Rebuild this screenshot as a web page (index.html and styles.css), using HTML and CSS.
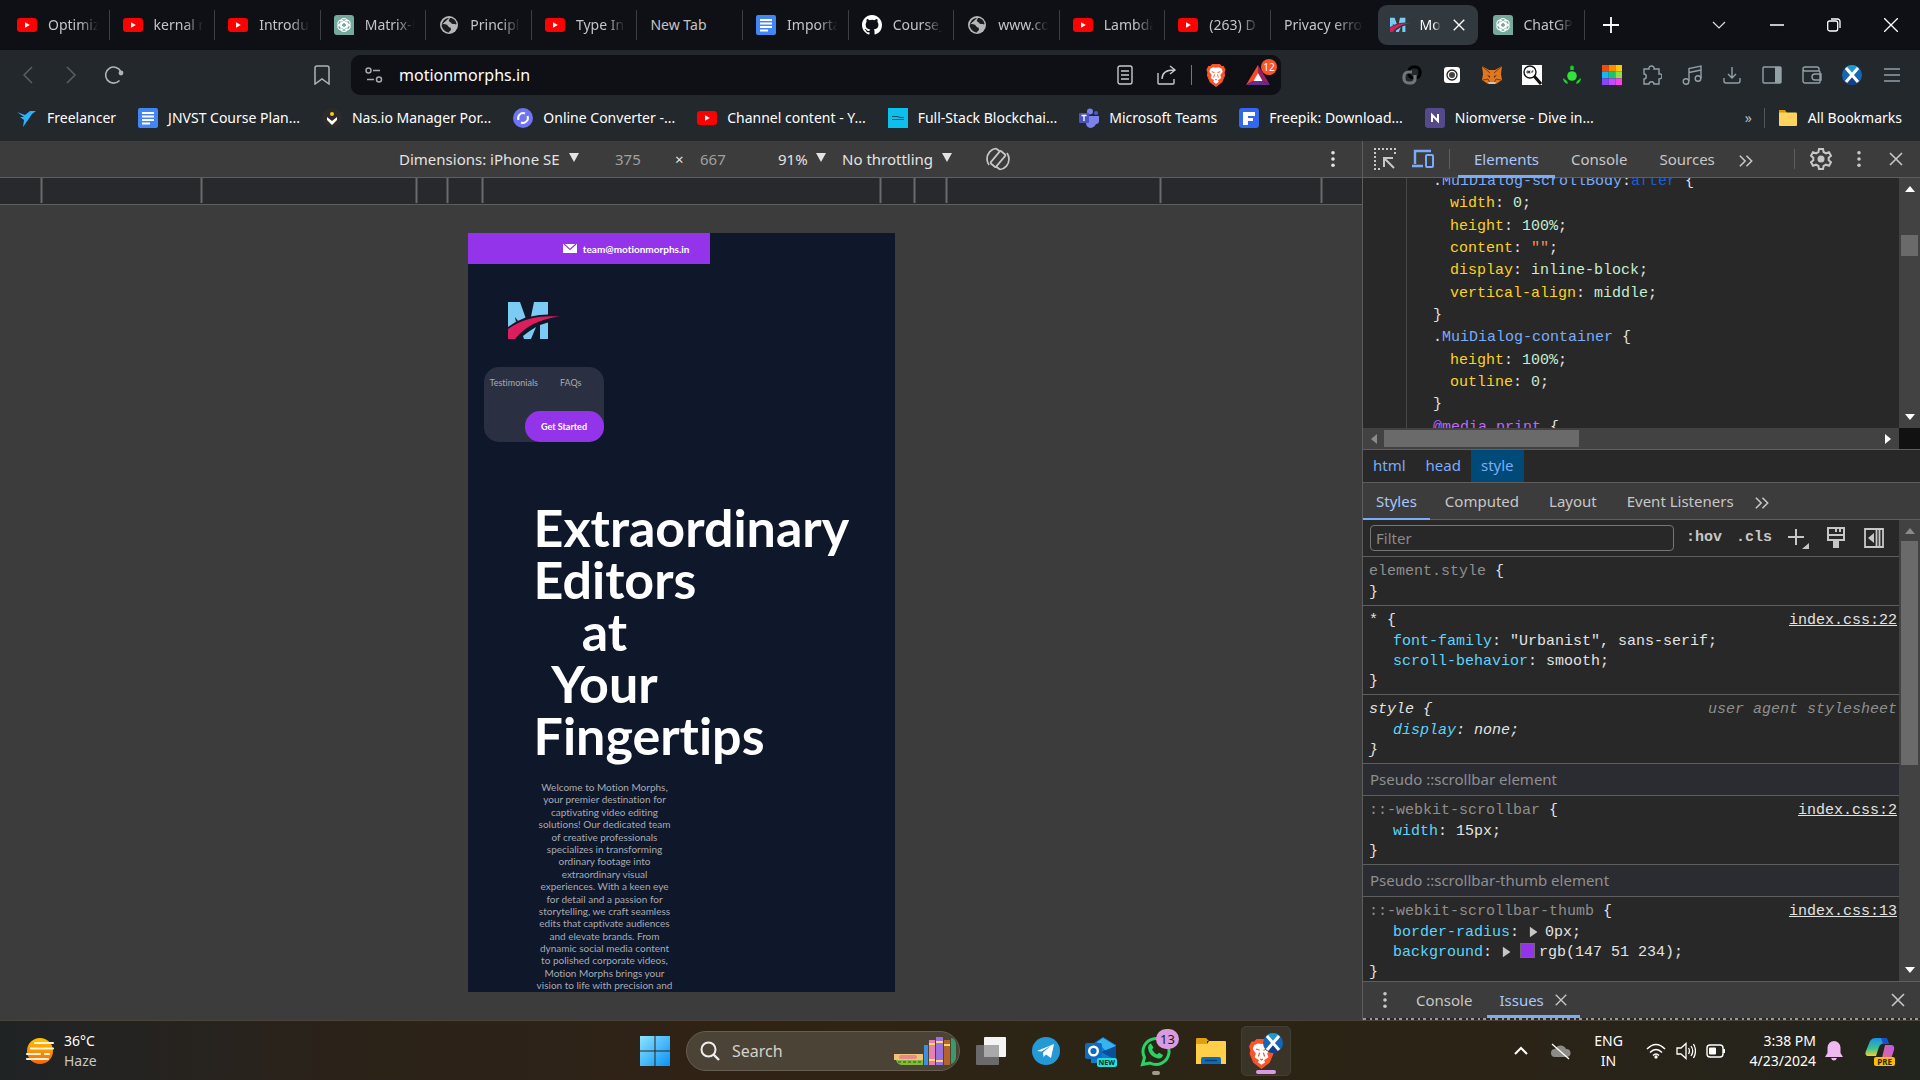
FILE: index.html
```html
<!DOCTYPE html>
<html lang="en">
<head>
<meta charset="utf-8">
<title>Motion Morphs</title>
<link rel="stylesheet" href="styles.css">
</head>
<body>
<svg class="defs" aria-hidden="true">
  <defs>
    <symbol id="yt" viewBox="0 0 20 20"><rect y="3" width="20" height="14" rx="3" fill="#f00"/><path d="M8 7.200v5.600l4.800-2.800z" fill="#fff"/></symbol>
    <symbol id="gpt" viewBox="0 0 20 20"><path d="M3 0h14a3 3 0 0 1 3 3v17H3a3 3 0 0 1-3-3V3a3 3 0 0 1 3-3z" fill="#75a99c"/><g fill="none" stroke="#fff" stroke-width="1.100"><rect x="7" y="3.500" width="6" height="9" rx="3"/><rect x="7" y="3.500" width="6" height="9" rx="3" transform="rotate(60 10 10)"/><rect x="7" y="3.500" width="6" height="9" rx="3" transform="rotate(120 10 10)"/><rect x="7" y="3.500" width="6" height="9" rx="3" transform="rotate(180 10 10)"/><rect x="7" y="3.500" width="6" height="9" rx="3" transform="rotate(240 10 10)"/><rect x="7" y="3.500" width="6" height="9" rx="3" transform="rotate(300 10 10)"/></g></symbol>
    <symbol id="globe" viewBox="0 0 20 20"><circle cx="10" cy="10" r="9" fill="#b4b6b9"/><path d="M10 3c-3 0-6 2-7 6 2 0 5 0 6 2s3 1 3 3-2 2-2 3.500c-4-.5-7-3.500-7.500-7.500M11 3c-1 2-2 3 0 4s1 2 3 2 3 1 3.500 0c-.5-3.500-3-6-6.500-6z" fill="#1b1c20"/></symbol>
    <symbol id="doc" viewBox="0 0 20 20"><rect width="20" height="20" rx="2" fill="#4285f4"/><path d="M4 5h12M4 8.500h12M4 12h12M4 15.500h8" stroke="#fff" stroke-width="1.900"/></symbol>
    <symbol id="github" viewBox="0 0 16 16"><path fill="#fff" d="M8 0C3.580 0 0 3.580 0 8c0 3.540 2.290 6.530 5.470 7.590.4.070.55-.17.55-.38 0-.19-.01-.82-.01-1.490-2.010.37-2.530-.49-2.690-.94-.09-.23-.48-.94-.82-1.130-.28-.15-.68-.52-.01-.53.63-.01 1.080.58 1.230.82.72 1.210 1.870.87 2.330.66.070-.52.28-.87.51-1.070-1.780-.2-3.640-.89-3.640-3.950 0-.87.31-1.590.82-2.150-.08-.2-.36-1.020.08-2.120 0 0 .67-.21 2.200.82a7.400 7.400 0 0 1 4 0c1.530-1.040 2.200-.82 2.200-.82.44 1.100.16 1.920.08 2.120.51.56.82 1.270.82 2.150 0 3.070-1.870 3.750-3.650 3.950.29.25.54.73.54 1.480 0 1.070-.01 1.930-.01 2.200 0 .21.15.46.55.38A8.010 8.010 0 0 0 16 8c0-4.420-3.580-8-8-8z"/></symbol>
    <symbol id="mm" viewBox="0 0 52 38"><path d="M0 0h12l5.500 15.500Q8 19 0 25zM26 0h14v12.500q-9 0-17 2zM15 34q6-5 13-9l-5 12h-7zM32 23l8-2.500V37h-8z" fill="#7bcbf2"/><path d="M7 15l1 5 2-1z" fill="#0f172a"/><path d="M0 37V27Q20 12 52 14.500Q22 18 7 37z" fill="#dc1e5e"/></symbol>
    <symbol id="brave" viewBox="0 0 20 24"><path d="M6 0h8l2 2h2l2 4-1 3 .5 3-3 7L10 24l-6.500-5-3-7L1 9 0 6l2-4h2z" fill="#fb542b"/><path d="M10 4l3-.5L16 5l1 3-2.500 3.500 1 3L12 17l1 1.500-3 2-3-2L8 17l-3.500-2.500 1-3L3 8l1-3 3-1.500z" fill="#fff"/><path d="M5.500 8l3 1M14.500 8l-3 1M8.500 11l-1 3M11.500 11l1 3M9 16l1 .800 1-.800" fill="none" stroke="#fb542b" stroke-width="1"/></symbol>
    <symbol id="saltire" viewBox="0 0 20 20"><clipPath id="disc"><circle cx="10" cy="10" r="10"/></clipPath><g clip-path="url(#disc)"><path d="M0 0h20v20H0z" fill="#1765b5"/><path d="M0 0h20L10 10z" fill="#1d9bd0"/><path d="M10 10l10 10H0z" fill="#123f8c"/><path d="M4 3l12 14M16 3L4 17" stroke="#fff" stroke-width="3"/></g></symbol>
    <symbol id="folder" viewBox="0 0 20 20"><path d="M1 2h6l2 3h9v4H1z" fill="#d99a0b"/><rect x="1" y="4.500" width="18" height="13.500" rx="1" fill="#ffd45e"/></symbol>
    <symbol id="cross" viewBox="0 0 16 16"><path d="M2 2l12 12M14 2L2 14" fill="none" stroke="currentColor" stroke-width="1.600"/></symbol>
    <symbol id="dots" viewBox="0 0 6 20"><circle cx="3" cy="3" r="2" fill="currentColor"/><circle cx="3" cy="10" r="2" fill="currentColor"/><circle cx="3" cy="17" r="2" fill="currentColor"/></symbol>
    <symbol id="more" viewBox="0 0 18 16"><path d="M2 2l6 6-6 6M9.500 2l6 6-6 6" fill="none" stroke="currentColor" stroke-width="1.800"/></symbol>
    <symbol id="tri" viewBox="0 0 10 10" preserveAspectRatio="none"><path d="M0 0h10L5 10z" fill="currentColor"/></symbol>
  </defs>
</svg>

<header class="browser">
  <div class="tabstrip">
    <nav class="tabs" aria-label="Tabs">
      <button class="tab"><svg class="fav"><use href="#yt"/></svg><span class="tab-title">Optimiz</span></button>
      <button class="tab"><svg class="fav"><use href="#yt"/></svg><span class="tab-title">kernal m</span></button>
      <button class="tab"><svg class="fav"><use href="#yt"/></svg><span class="tab-title">Introdu</span></button>
      <button class="tab"><svg class="fav"><use href="#gpt"/></svg><span class="tab-title">Matrix-M</span></button>
      <button class="tab"><svg class="fav"><use href="#globe"/></svg><span class="tab-title">Principl</span></button>
      <button class="tab"><svg class="fav"><use href="#yt"/></svg><span class="tab-title">Type Inf</span></button>
      <button class="tab"><span class="tab-title tab-full">New Tab</span></button>
      <button class="tab"><svg class="fav"><use href="#doc"/></svg><span class="tab-title">Importa</span></button>
      <button class="tab"><svg class="fav"><use href="#github"/></svg><span class="tab-title">Course_</span></button>
      <button class="tab"><svg class="fav"><use href="#globe"/></svg><span class="tab-title">www.co</span></button>
      <button class="tab"><svg class="fav"><use href="#yt"/></svg><span class="tab-title">Lambda</span></button>
      <button class="tab"><svg class="fav"><use href="#yt"/></svg><span class="tab-title">(263) D</span></button>
      <button class="tab tab-plain"><span class="tab-title">Privacy error</span></button>
      <button class="tab tab-active"><svg class="fav"><use href="#mm"/></svg><span class="tab-title">Mo</span><svg class="tab-close"><use href="#cross"/></svg></button>
      <button class="tab"><svg class="fav"><use href="#gpt"/></svg><span class="tab-title">ChatGP</span></button>
    </nav>
    <div class="window-controls">
      <button class="win-new" aria-label="New tab"><svg width="16" height="16" viewBox="0 0 16 16"><path d="M8 0v16M0 8h16" stroke="#fff" stroke-width="1.800"/></svg></button>
      <button class="win" aria-label="Search tabs"><svg width="14" height="8" viewBox="0 0 14 8"><path d="M1 1l6 6 6-6" fill="none" stroke="#ddd" stroke-width="1.200"/></svg></button>
      <button class="win" aria-label="Minimize"><svg width="14" height="2"><path d="M0 1h14" stroke="#fff" stroke-width="1.500"/></svg></button>
      <button class="win" aria-label="Restore"><svg width="14" height="14" viewBox="0 0 14 14"><rect x=".7" y="3" width="10" height="10" rx="2" fill="none" stroke="#fff" stroke-width="1.300"/><path d="M4 1h6.500A2.500 2.500 0 0 1 13 3.500V10" fill="none" stroke="#fff" stroke-width="1.300"/></svg></button>
      <button class="win" aria-label="Close"><svg width="14" height="14" viewBox="0 0 14 14"><path d="M0 0l14 14M14 0L0 14" stroke="#fff" stroke-width="1.300"/></svg></button>
    </div>
  </div>

  <div class="toolbar">
    <div class="nav-buttons">
      <button class="cell" aria-label="Back"><svg width="10" height="18" viewBox="0 0 10 18"><path d="M9 1L1 9l8 8" fill="none" stroke="#596167" stroke-width="1.500"/></svg></button>
      <button class="cell" aria-label="Forward"><svg width="10" height="18" viewBox="0 0 10 18"><path d="M1 1l8 8-8 8" fill="none" stroke="#596167" stroke-width="1.500"/></svg></button>
      <button class="cell" aria-label="Reload"><svg width="20" height="20" viewBox="0 0 20 20"><path d="M15.500 15.500A8 8 0 1 1 17 7" fill="none" stroke="#a9b4bb" stroke-width="1.600"/><circle cx="17" cy="8" r="2.400" fill="#a9b4bb"/></svg></button>
      <button class="cell nav-mark" aria-label="Bookmark"><svg width="16" height="20" viewBox="0 0 16 20"><path d="M1 3a2 2 0 0 1 2-2h10a2 2 0 0 1 2 2v16l-7-5-7 5z" fill="none" stroke="#a9b4bb" stroke-width="1.500"/></svg></button>
    </div>
    <div class="address">
      <svg width="18" height="16" viewBox="0 0 18 16"><g fill="none" stroke="#a5a8ad" stroke-width="1.500"><circle cx="3.500" cy="3.500" r="2.500"/><path d="M8 3.500h7M2 12.500h7"/><circle cx="14" cy="12.500" r="2.500"/></g></svg>
      <input class="address-input" type="text" value="motionmorphs.in" aria-label="Address">
      <svg width="16" height="20" viewBox="0 0 16 20"><g fill="none" stroke="#c7c9cc" stroke-width="1.400"><rect x="1" y="1" width="14" height="18" rx="2"/><path d="M4 6h8M4 10h8M4 14h8"/></g></svg>
      <svg width="20" height="20" viewBox="0 0 20 20"><path d="M1 8v10a1 1 0 0 0 1 1h14a1 1 0 0 0 1-1v-4M5 14c0-6 4-9 12-9M13 1l5 4-5 4" fill="none" stroke="#c7c9cc" stroke-width="1.400"/></svg>
      <span class="address-rule"></span>
      <svg width="20" height="23"><use href="#brave"/></svg>
      <span class="bat"><svg width="24" height="20" viewBox="0 0 24 20"><path d="M12 0L0 20l12-7z" fill="#ff4724"/><path d="M12 0l12 20-12-7z" fill="#9e1f63"/><path d="M0 20h24l-12-7z" fill="#662d91"/><path d="M12 8l-4.500 8h9z" fill="#fff"/></svg><b class="bat-count">12</b></span>
    </div>
    <div class="extensions">
      <button class="cell" aria-label="Link"><svg width="20" height="20" viewBox="0 0 20 20"><g fill="none" stroke-width="3.200"><rect x="7" y="2" width="11" height="11" rx="4.500" stroke="#000"/><path d="M10 7H6.500A4.500 4.500 0 0 0 2 11.500v2A4.500 4.500 0 0 0 6.500 18H9a4 4 0 0 0 4-4v-4" stroke="#70777c"/></g></svg></button>
      <button class="cell" aria-label="Recorder"><svg width="16" height="16" viewBox="0 0 16 16"><rect width="16" height="16" rx="3" fill="#fff"/><circle cx="8" cy="8" r="5" fill="none" stroke="#222" stroke-width="1.300"/><circle cx="8" cy="8" r="3" fill="#444"/></svg></button>
      <button class="cell" aria-label="MetaMask"><svg width="20" height="20" viewBox="0 0 20 20"><path d="M0 1l7 4h6l7-4-1 8 1 6-6 4H6l-6-4 1-6z" fill="#e2761b"/><path d="M0 1l8 7M20 1l-8 7M1 15l5-1 2 4h4l2-4 5 1" stroke="#763d16" fill="none"/><path d="M6 17h8l-1 2H7z" fill="#d7c1b3"/><path d="M5 10l3 1v2zM15 10l-3 1v2z" fill="#233447"/></svg></button>
      <button class="cell" aria-label="OCR"><svg width="20" height="20" viewBox="0 0 20 20"><path d="M0 0h20v20H0z" fill="#fff"/><circle cx="8" cy="7" r="6" fill="none" stroke="#111" stroke-width="1.400"/><path d="M12 11l7 8" stroke="#111" stroke-width="3"/><path d="M5 6v2h1.500V6zM8.500 6H7.500v2h1M10 8V6h1.500" fill="none" stroke="#111" stroke-width=".8"/></svg></button>
      <button class="cell" aria-label="Idea"><svg width="20" height="20" viewBox="0 0 20 20"><circle cx="10" cy="11" r="4.800" fill="#2ee53b"/><circle cx="10" cy="2.500" r="2" fill="#13c41f"/><path d="M8 5l2-4 2 4M1 13q0 5 5 6l-1-3zM19 13q0 5-5 6l1-3z" fill="#13d81f"/></svg></button>
      <button class="cell" aria-label="Palette"><svg width="20" height="20" viewBox="0 0 21 21"><path d="M0 0h7v7H0z" fill="#f44a0c"/><path d="M7 0h7v7H7z" fill="#ff8a00"/><path d="M14 0h7v7h-7z" fill="#ffc800"/><path d="M0 7h7v7H0z" fill="#12b7f5"/><path d="M7 7h7v7H7z" fill="#12c96a"/><path d="M14 7h7v7h-7z" fill="#8ede4a"/><path d="M0 14h7v7H0z" fill="#8247ff"/><path d="M7 14h7v7H7z" fill="#c04bff"/><path d="M14 14h7v7h-7z" fill="#f843e4"/></svg></button>
      <button class="cell" aria-label="Extensions"><svg width="20" height="20" viewBox="0 0 20 20"><path d="M2 4h5c-1-4 6-4 5 0h5v5c4-1 4 5 0 5v5h-5c0-3-5-3-5 0H2v-5c3 0 3-5 0-5z" fill="none" stroke="#92a0a8" stroke-width="1.400"/></svg></button>
      <button class="cell" aria-label="Music"><svg width="20" height="20" viewBox="0 0 20 20"><g fill="none" stroke="#92a0a8" stroke-width="1.400"><circle cx="4" cy="16.500" r="2.800"/><circle cx="16" cy="13.500" r="2.800"/><path d="M7 16V3.500L19 1v12.500M7 7.500L19 5"/></g></svg></button>
      <button class="cell" aria-label="Downloads"><svg width="18" height="18" viewBox="0 0 18 18"><path d="M9 1v11M5 8l4 4 4-4M1 12v3a2 2 0 0 0 2 2h12a2 2 0 0 0 2-2v-3" fill="none" stroke="#92a0a8" stroke-width="1.400"/></svg></button>
      <button class="cell" aria-label="Sidebar"><svg width="20" height="18" viewBox="0 0 20 18"><rect x="1" y="1" width="18" height="16" rx="1" fill="none" stroke="#92a0a8" stroke-width="1.400"/><path d="M13 1h6v16h-6z" fill="#92a0a8"/></svg></button>
      <button class="cell" aria-label="Wallet"><svg width="20" height="18" viewBox="0 0 20 18"><path d="M17 5V3a2 2 0 0 0-2-2H3a2 2 0 0 0 0 4h14a1 1 0 0 1 1 1v10a1 1 0 0 1-1 1H3a2 2 0 0 1-2-2V3M19 8h-6a3 3 0 0 0 0 6h6z" fill="none" stroke="#92a0a8" stroke-width="1.400"/></svg></button>
      <button class="cell" aria-label="Profile"><svg width="20" height="20"><use href="#saltire"/></svg></button>
      <button class="cell" aria-label="Menu"><svg width="16" height="14" viewBox="0 0 16 14"><path d="M0 1h16M0 7h16M0 13h16" stroke="#92a0a8" stroke-width="1.400"/></svg></button>
    </div>
  </div>

  <nav class="bookmarks" aria-label="Bookmarks">
    <a class="bookmark" href="#"><svg class="fav" viewBox="0 0 20 20"><path d="M0 4l8 3 5-4h6l-4 3-4 6-5 7 1-7-4-3 4 0z" fill="#29b2fe"/></svg>Freelancer</a>
    <a class="bookmark" href="#"><svg class="fav"><use href="#doc"/></svg>JNVST Course Plan...</a>
    <a class="bookmark" href="#"><svg class="fav" viewBox="0 0 20 20"><circle cx="10" cy="10" r="10" fill="#2c2b29"/><circle cx="10" cy="6" r="2" fill="#fbc91b"/><path d="M5 9l5 4 5-4v3l-5 5-5-5z" fill="#fff"/></svg>Nas.io Manager Por...</a>
    <a class="bookmark" href="#"><svg class="fav" viewBox="0 0 20 20"><circle cx="10" cy="10" r="10" fill="#6f74f2"/><path d="M5.500 12A5 5 0 0 1 12 5.500M14.500 8A5 5 0 0 1 8 14.500" fill="none" stroke="#fff" stroke-width="2"/></svg>Online Converter -...</a>
    <a class="bookmark" href="#"><svg class="fav"><use href="#yt"/></svg>Channel content - Y...</a>
    <a class="bookmark" href="#"><svg class="fav" viewBox="0 0 20 20"><path d="M0 0h20v20H0z" fill="#0cc0eb"/><path d="M4 8.500h6l2 1h4M4 11.500h12" stroke="#0b4f66" fill="none"/></svg>Full-Stack Blockchai...</a>
    <a class="bookmark" href="#"><svg class="fav" viewBox="0 0 20 20"><circle cx="11" cy="3.500" r="3" fill="#7b83eb"/><circle cx="17" cy="5" r="2" fill="#5059c9"/><path d="M7 8h13v5q0 3-3 3-2 4-6 4-4-1-4-5z" fill="#7b83eb"/><rect y="5" width="10" height="10" rx="1" fill="#4b53bc"/><path d="M2.500 7.500h5M5 7.500v5.500" stroke="#fff" stroke-width="1.300"/></svg>Microsoft Teams</a>
    <a class="bookmark" href="#"><svg class="fav" viewBox="0 0 20 20"><rect width="20" height="20" rx="3" fill="#3268ee"/><path d="M4 4h12v4H9v2h5v3H9v4H4z" fill="#fff"/></svg>Freepik: Download...</a>
    <a class="bookmark" href="#"><svg class="fav" viewBox="0 0 20 20"><rect width="20" height="20" rx="3" fill="#54498b"/><path d="M7 14V7l6 6V6" fill="none" stroke="#fff" stroke-width="2"/></svg>Niomverse - Dive in...</a>
    <span class="bookmarks-more">»</span>
    <a class="bookmark bookmark-all" href="#"><svg class="fav"><use href="#folder"/></svg>All Bookmarks</a>
  </nav>
</header>

<main class="workspace">
  <section class="device">
    <div class="device-bar">
      <label class="pick pick-model"><select aria-label="Dimensions"><option>Dimensions: iPhone SE</option></select><svg class="pick-arrow"><use href="#tri"/></svg></label>
      <input class="size" type="text" value="375" aria-label="Width">
      <span class="times">×</span>
      <input class="size" type="text" value="667" aria-label="Height">
      <label class="pick pick-zoom"><select aria-label="Zoom"><option>91%</option></select><svg class="pick-arrow"><use href="#tri"/></svg></label>
      <label class="pick pick-throttle"><select aria-label="Throttling"><option>No throttling</option></select><svg class="pick-arrow"><use href="#tri"/></svg></label>
      <button class="rotate" aria-label="Rotate"><svg width="24" height="24" viewBox="0 0 24 24"><g fill="none" stroke="#c7c7c7" stroke-width="1.700"><rect x="8.500" y="4" width="7" height="16" rx="1" transform="rotate(40 12 12)"/><path d="M10 1.500C5 2 1 6.500 1 12q0 3 2 6M14 22.500c5-.5 9-5 9-10.500q0-3-2-6M10 1.500l4 3M14 22.500l-4-3"/></g></svg></button>
      <button class="device-more" aria-label="More options"><svg width="6" height="18"><use href="#dots"/></svg></button>
    </div>
    <svg class="ruler" aria-hidden="true"><path d="M41.500 0v25M201.500 0v25M416.500 0v25M447.500 0v25M482.500 0v25M880.500 0v25M914.500 0v25M946.500 0v25M1160.500 0v25M1321.500 0v25" stroke="#6a6b6d" stroke-width="2"/></svg>
    <div class="stage">
      <article class="phone">
        <div class="site">
          <div class="site-top"><svg width="14" height="9" viewBox="0 0 14 9"><path d="M0 0h14v9H0z" fill="#fff"/><path d="M1 0l6 5.500L13 0" fill="none" stroke="#9333ea" stroke-width="1.200"/></svg><a href="#">team@motionmorphs.in</a></div>
          <svg class="site-logo"><use href="#mm"/></svg>
          <nav class="site-nav">
            <div class="site-links"><a href="#">Testimonials</a><a href="#">FAQs</a></div>
            <button class="site-cta">Get Started</button>
          </nav>
          <div class="hero">
            <h1 class="hero-title">Extraordinary<br>Editors<br>at<br>Your<br>Fingertips</h1>
            <p class="hero-text">Welcome to Motion Morphs,<br>your premier destination for<br>captivating video editing<br>solutions! Our dedicated team<br>of creative professionals<br>specializes in transforming<br>ordinary footage into<br>extraordinary visual<br>experiences. With a keen eye<br>for detail and a passion for<br>storytelling, we craft seamless<br>edits that captivate audiences<br>and elevate brands. From<br>dynamic social media content<br>to polished corporate videos,<br>Motion Morphs brings your<br>vision to life with precision and</p>
          </div>
        </div>
      </article>
    </div>
  </section>

  <aside class="devtools">
    <div class="panel-bar">
      <button class="tool" aria-label="Inspect"><svg width="22" height="22" viewBox="0 0 22 22"><path d="M21 6V1H1v20h5" fill="none" stroke="#c7c7c7" stroke-width="2" stroke-dasharray="2 2"/><path d="M20 20l-9-9M10 19v-9h9" fill="none" stroke="#c7c7c7" stroke-width="2"/></svg></button>
      <button class="tool" aria-label="Toggle device"><svg width="22" height="20" viewBox="0 0 22 20"><path d="M3 15V2h16M0 17h11" fill="none" stroke="#7cacf8" stroke-width="2.400"/><rect x="14" y="6" width="7" height="12" rx="1" fill="none" stroke="#7cacf8" stroke-width="2"/></svg></button>
      <span class="rule"></span>
      <button class="ptab ptab-on">Elements</button>
      <button class="ptab">Console</button>
      <button class="ptab">Sources</button>
      <button class="ptab-more" aria-label="More tabs"><svg width="18" height="14"><use href="#more"/></svg></button>
      <span class="rule rule-end"></span>
      <button class="tool" aria-label="Settings"><svg width="22" height="22" viewBox="0 0 22 22"><path d="M9 1h4l.6 3 2.400 1.300 3-1 2 3.500-2.300 2v2.400l2.300 2-2 3.500-3-1-2.400 1.300L13 21H9l-.6-3L6 16.700l-3 1-2-3.500 2.300-2V9.800L1 7.800l2-3.500 3 1L8.400 4z" fill="none" stroke="#c7c7c7" stroke-width="2"/><circle cx="11" cy="11" r="3.500" fill="#c7c7c7"/></svg></button>
      <button class="tool" aria-label="More options"><svg width="6" height="18"><use href="#dots"/></svg></button>
      <button class="tool tool-last" aria-label="Close"><svg width="16" height="16"><use href="#cross"/></svg></button>
    </div>

    <div class="source">
      <div class="source-code">
        <div class="line">.<i class="k-sel">MuiDialog-scrollBody</i>:<i class="k-ps">after</i> {</div>
        <div class="line line-in"><i class="k-p">width</i>: <i class="k-v">0</i>;</div>
        <div class="line line-in"><i class="k-p">height</i>: <i class="k-v">100%</i>;</div>
        <div class="line line-in"><i class="k-p">content</i>: <i class="k-s">""</i>;</div>
        <div class="line line-in"><i class="k-p">display</i>: <i class="k-v">inline-block</i>;</div>
        <div class="line line-in"><i class="k-p">vertical-align</i>: <i class="k-v">middle</i>;</div>
        <div class="line">}</div>
        <div class="line">.<i class="k-sel">MuiDialog-container</i> {</div>
        <div class="line line-in"><i class="k-p">height</i>: <i class="k-v">100%</i>;</div>
        <div class="line line-in"><i class="k-p">outline</i>: <i class="k-v">0</i>;</div>
        <div class="line">}</div>
        <div class="line"><i class="k-at">@media print</i> {</div>
      </div>
      <div class="vbar vbar-source"><svg class="arrow arrow-up"><use href="#tri"/></svg><span class="vthumb vthumb-source"></span><svg class="arrow"><use href="#tri"/></svg></div>
    </div>
    <div class="hbar"><svg class="arrow arrow-left"><use href="#tri"/></svg><span class="hthumb"></span><svg class="arrow arrow-right"><use href="#tri"/></svg><span class="hbar-corner"></span></div>

    <nav class="crumbs" aria-label="DOM path"><a href="#">html</a><a href="#">head</a><a class="crumb-on" href="#">style</a></nav>

    <div class="subtabs">
      <button class="stab stab-on">Styles</button>
      <button class="stab">Computed</button>
      <button class="stab">Layout</button>
      <button class="stab">Event Listeners</button>
      <button class="ptab-more" aria-label="More tabs"><svg width="18" height="14"><use href="#more"/></svg></button>
    </div>

    <div class="styles">
      <div class="styles-main">
        <div class="filter">
          <input class="filter-input" type="text" placeholder="Filter" aria-label="Filter">
          <button class="filter-word">:hov</button>
          <button class="filter-word">.cls</button>
          <button class="filter-icon" aria-label="New rule"><svg width="22" height="24" viewBox="0 0 22 24"><path d="M9 3v16M1 11h16" stroke="#c7c7c7" stroke-width="2"/><path d="M22 17v6h-7z" fill="#c7c7c7"/></svg></button>
          <button class="filter-icon" aria-label="Rendering"><svg width="18" height="22" viewBox="0 0 18 22"><path d="M1 1h16v12H1zM1 8h16M9 1v4M13 1v4" fill="none" stroke="#c7c7c7" stroke-width="2"/><path d="M6 13h6v8H6z" fill="#c7c7c7"/></svg></button>
          <button class="filter-icon" aria-label="Computed sidebar"><svg width="20" height="20" viewBox="0 0 20 20"><path d="M1 1h18v18H1zM12.500 1v18M15.500 1v18" fill="none" stroke="#c7c7c7" stroke-width="1.800"/><path d="M10 5v10l-6-5z" fill="#c7c7c7"/></svg></button>
        </div>
        <section class="rule-block">
          <div class="rule-head"><span><i class="dim">element.style</i> {</span></div>
          <div>}</div>
        </section>
        <section class="rule-block">
          <div class="rule-head"><span>* {</span><a href="#">index.css:22</a></div>
          <div class="decl"><i class="prop">font-family</i>: "Urbanist", sans-serif;</div>
          <div class="decl"><i class="prop">scroll-behavior</i>: smooth;</div>
          <div>}</div>
        </section>
        <section class="rule-block rule-agent">
          <div class="rule-head"><span>style {</span><span class="dim">user agent stylesheet</span></div>
          <div class="decl"><i class="prop">display</i>: none;</div>
          <div>}</div>
        </section>
        <h2 class="pseudo">Pseudo ::scrollbar element</h2>
        <section class="rule-block">
          <div class="rule-head"><span><i class="dim">::-webkit-scrollbar</i> {</span><a href="#">index.css:2</a></div>
          <div class="decl"><i class="prop">width</i>: 15px;</div>
          <div>}</div>
        </section>
        <h2 class="pseudo">Pseudo ::scrollbar-thumb element</h2>
        <section class="rule-block">
          <div class="rule-head"><span><i class="dim">::-webkit-scrollbar-thumb</i> {</span><a href="#">index.css:13</a></div>
          <div class="decl"><i class="prop">border-radius</i>: <svg class="expand"><use href="#tri"/></svg>0px;</div>
          <div class="decl"><i class="prop">background</i>: <svg class="expand"><use href="#tri"/></svg><span class="swatch"></span>rgb(147 51 234);</div>
          <div>}</div>
        </section>
      </div>
      <div class="vbar"><svg class="arrow arrow-up arrow-off"><use href="#tri"/></svg><span class="vthumb vthumb-styles"></span><svg class="arrow"><use href="#tri"/></svg></div>
    </div>

    <div class="drawer">
      <button class="tool" aria-label="More tools"><svg width="6" height="18"><use href="#dots"/></svg></button>
      <button class="dtab">Console</button>
      <button class="dtab dtab-on">Issues<svg width="14" height="14"><use href="#cross"/></svg></button>
      <button class="tool drawer-close" aria-label="Close drawer"><svg width="16" height="16"><use href="#cross"/></svg></button>
    </div>
    <div class="drawer-edge"></div>
  </aside>
</main>

<footer class="taskbar">
  <button class="weather">
    <svg width="30" height="28" viewBox="0 0 30 28"><defs><linearGradient id="sun" x1="0" y1="0" x2="0" y2="1"><stop offset="0" stop-color="#ffc400"/><stop offset="1" stop-color="#f7630c"/></linearGradient></defs><circle cx="15" cy="14" r="13" fill="url(#sun)"/><path d="M10 6h18M6 11.500h22M2 17h13M20 17h4M2 22h21" stroke="#fff3d8" stroke-width="2.200" stroke-linecap="round"/></svg>
    <span class="weather-text"><span>36°C</span><span class="weather-sub">Haze</span></span>
  </button>

  <div class="apps">
    <button class="app app-start" aria-label="Start"><svg width="30" height="30" viewBox="0 0 30 30"><defs><linearGradient id="win" x1="0" y1="0" x2="1" y2="1"><stop offset="0" stop-color="#8be3ff"/><stop offset="1" stop-color="#0a93f5"/></linearGradient></defs><path d="M0 0h14.500v14.500H0zM15.500 0H30v14.500H15.500zM0 15.500h14.500V30H0zM15.500 15.500H30V30H15.500z" fill="url(#win)"/></svg></button>
    <label class="search">
      <svg width="20" height="20" viewBox="0 0 20 20"><circle cx="8.500" cy="8.500" r="7" fill="none" stroke="#eee" stroke-width="2"/><path d="M13.500 13.500L19 19" stroke="#eee" stroke-width="2.400"/></svg>
      <input class="search-input" type="text" placeholder="Search" aria-label="Search">
      <svg width="64" height="30" viewBox="0 0 64 30"><path d="M1 18h29v6H1z" fill="#f3c27a"/><rect x="6" y="19" width="18" height="4" rx="2" fill="#e98888"/><path d="M3 24h27v5H8q-4-1-5-5z" fill="#86b83c"/><path d="M5 26h24" stroke="#4f8a22" stroke-dasharray="3 2" stroke-width="2"/><path d="M31 9h4v20h-4z" fill="#3f8fe0"/><path d="M36 4h6v25h-6z" fill="#e77fb0"/><path d="M43 1h7v28h-7z" fill="#9a72e0"/><path d="M51 4h6v25h-6z" fill="#b5632d"/><path d="M58 2q5 0 5 8v12q-1 5-5 6z" fill="#3b9a68"/><path d="M36 8h6M43 6h7M51 9h6M36 24h6M43 25h7" stroke="#ffd966" stroke-width="2"/></svg>
    </label>
    <button class="app" aria-label="Task view"><svg width="32" height="30" viewBox="0 0 32 30"><rect x="9" y="1" width="22" height="20" rx="1" fill="#f4f4f4"/><rect x="1" y="9" width="23" height="20" rx="1" fill="#77777a" opacity=".85"/><path d="M9 9h15v12H9z" fill="#a9a9a9"/></svg></button>
    <button class="app" aria-label="Telegram"><svg width="28" height="28" viewBox="0 0 28 28"><circle cx="14" cy="14" r="14" fill="#2399d6"/><path d="M5 14L22 7l-3 14-5-3.500-2.500 2.500-.5-4.500 8-7-9.500 6z" fill="#fff"/></svg></button>
    <button class="app" aria-label="Outlook"><svg width="32" height="30" viewBox="0 0 32 30"><path d="M6 9L18 1l13 8v18H6z" fill="#1378d0"/><path d="M12 6l6-4 13 8-9 6z" fill="#35b4f0"/><path d="M31 10v14L16 16z" fill="#0a4e9c"/><rect y="7" width="17" height="16" rx="2" fill="#0f6cbd"/><circle cx="8.500" cy="15" r="4.300" fill="none" stroke="#fff" stroke-width="2.400"/></svg><b class="tag-new">NEW</b></button>
    <button class="app app-wa" aria-label="WhatsApp"><svg width="32" height="32" viewBox="0 0 32 32"><path d="M2.500 29.500l2-7A13 13 0 1 1 10 28z" fill="none" stroke="#25d366" stroke-width="3"/><path d="M11 8.500l2.500 4-1.500 2q2 3.500 5 5l2-1.800 4 2.300q-1 4-5 3.500-9-2-10-10.500 0-3.500 3-4.500z" fill="#25d366"/></svg><span class="wa-count">13</span></button>
    <button class="app" aria-label="File Explorer"><svg width="32" height="28" viewBox="0 0 32 28"><path d="M1 2q0-1 1-1h9l3 3h-2v4H1z" fill="#e0a015"/><path d="M1 7h11l2-3h16q1 0 1 1v22H1z" fill="#ffcf4a"/><path d="M6 27v-5q0-2 2-2h16q2 0 2 2v5z" fill="#0f6cbd"/><path d="M10 23.500h12" stroke="#0a3f7a" stroke-width="1.500"/></svg></button>
    <button class="app app-on" aria-label="Brave"><svg width="34" height="36" viewBox="0 0 34 36"><use href="#brave" x="0" y="6" width="25" height="30"/><use href="#saltire" x="14" y="0" width="20" height="20"/></svg></button>
  </div>

  <div class="tray">
    <button class="tray-up" aria-label="Hidden icons"><svg width="14" height="9" viewBox="0 0 14 9"><path d="M1 8l6-6 6 6" fill="none" stroke="#fff" stroke-width="2"/></svg></button>
    <svg width="22" height="18" viewBox="0 0 22 18"><path d="M5 15a4 4 0 0 1 0-8 6 6 0 0 1 11 0 4 4 0 0 1 1 8z" fill="#8d8b87"/><path d="M2 2l17 15" stroke="#fff" stroke-width="1.300"/></svg>
    <button class="lang"><span>ENG</span><span>IN</span></button>
    <button class="status" aria-label="Quick settings">
      <svg width="20" height="16" viewBox="0 0 20 16"><path d="M1 6q9-9 18 0M4 9.500q6-6 12 0M7 12.500q3-3 6 0" fill="none" stroke="#fff" stroke-width="1.500"/><circle cx="10" cy="14" r="1.700" fill="#fff"/></svg>
      <svg width="20" height="18" viewBox="0 0 20 18"><path d="M1 6h4l5-4.500v15L5 12H1zM12.500 6q2 3 0 6M15 4q3.500 5 0 10M17.500 2q4 7 0 14" fill="none" stroke="#fff" stroke-width="1.300"/></svg>
      <svg width="20" height="14" viewBox="0 0 20 14"><rect x="1" y="1" width="16" height="12" rx="3" fill="none" stroke="#fff" stroke-width="1.400"/><rect x="3" y="3.500" width="7" height="7" rx="1" fill="#fff"/><path d="M18 5v4" stroke="#fff" stroke-width="2"/></svg>
    </button>
    <button class="clock"><span>3:38 PM</span><span>4/23/2024</span></button>
    <svg class="bell" width="18" height="20" viewBox="0 0 18 20"><path d="M9 0a6.500 6.500 0 0 1 6.500 6.500V12L18 16H0l2.500-4V6.500A6.500 6.500 0 0 1 9 0zM6 17h6q-1 2.500-3 2.500T6 17z" fill="#efb8f0"/></svg>
    <button class="copilot" aria-label="Copilot"><svg width="30" height="28" viewBox="0 0 30 28"><defs><linearGradient id="cpa" x1="0" y1="0" x2="0" y2="1"><stop offset="0" stop-color="#1b8fe8"/><stop offset=".6" stop-color="#3fc48d"/><stop offset="1" stop-color="#f7cf2f"/></linearGradient><linearGradient id="cpb" x1="1" y1="0" x2="0" y2="1"><stop offset="0" stop-color="#b45cf0"/><stop offset="1" stop-color="#ff6f61"/></linearGradient></defs><path d="M10 1h10q3 0 2 3l-1 3q-5-2-7 3l-3 9H4q-5 0-3-5L5 4q2-3 5-3z" fill="url(#cpa)"/><path d="M16 1h4q3 0 4 6h-6z" fill="#1a4fd0"/><path d="M20 8h6q4 0 3 5l-3 9q-1 4-5 4h-8q3-1 4-5z" fill="url(#cpb)"/></svg><b class="tag-pre">PRE</b></button>
  </div>
</footer>
</body>
</html>
```

FILE: styles.css
```css
* { box-sizing: border-box; }

body {
  margin: 0;
  height: 100vh;
  display: flex;
  flex-direction: column;
  overflow: hidden;
  background: #3c3c3c;
  color: #fff;
  font: 14px/20px "Noto Sans", "Open Sans", sans-serif;
}

button, input, select {
  margin: 0;
  padding: 0;
  border: 0;
  background: none;
  color: inherit;
  font: inherit;
  outline: 0;
}

a { color: inherit; text-decoration: none; }
i { font-style: inherit; }
svg { flex: none; }
.defs { position: absolute; width: 0; height: 0; }
.fav { width: 20px; height: 20px; flex: none; }

/* Tab strip */
.tabstrip { display: flex; height: 50px; background: #0f1015; }
.tabs { flex: 1; display: flex; align-items: center; padding-left: 4px; min-width: 0; }
.tab {
  flex: 1 1 0;
  min-width: 0;
  height: 30px;
  display: flex;
  align-items: center;
  gap: 11px;
  padding: 0 8px 0 13px;
  border-right: 1px solid #3c3e42;
  color: #c3c4c7;
}
.tab-title {
  flex: 1;
  text-align: left;
  white-space: nowrap;
  overflow: hidden;
  -webkit-mask-image: linear-gradient(90deg, #000 60%, transparent 95%);
  mask-image: linear-gradient(90deg, #000 60%, transparent 95%);
}
.tab-full { -webkit-mask-image: none; mask-image: none; }
.tab-plain { border-right: 0; }
.tab-active {
  flex: 0 0 100px;
  height: 40px;
  margin: 0 2px;
  padding: 0 12px;
  gap: 10px;
  border: 0;
  border-radius: 9px;
  background: #32393e;
  color: #fff;
}
.tab-active .tab-title { flex: 0 0 22px; }
.tab-close { width: 14px; height: 14px; margin-left: auto; }
.window-controls { display: flex; width: 335px; align-items: center; }
.win-new { width: 53px; margin-right: 53px; display: flex; justify-content: center; }
.win { width: 58px; display: flex; justify-content: center; }

/* Navigation row */
.browser { background: #23282c; }
.toolbar { display: flex; align-items: center; height: 50px; }
.cell { width: 40px; height: 40px; display: flex; align-items: center; justify-content: center; }
.nav-buttons { display: flex; width: 351px; padding: 0 9px 0 8px; gap: 3px; }
.nav-mark { margin-left: auto; }
.address {
  flex: 1;
  height: 40px;
  display: flex;
  align-items: center;
  gap: 14px;
  padding: 0 10px 0 14px;
  border-radius: 9px;
  background: #0f1015;
}
.address-input { flex: 1; min-width: 0; padding-left: 2px; font-size: 16px; }
.address > svg + svg { margin-left: 10px; }
.address-rule { width: 1px; height: 20px; background: #74777b; }
.bat { position: relative; display: flex; margin-left: 6px; padding-right: 1px; }
.bat-count {
  position: absolute;
  top: -6px;
  right: -6px;
  width: 16px;
  border-radius: 8px;
  background: #fb542b;
  font: 10px/16px "Noto Sans", sans-serif;
  text-align: center;
}
.extensions { display: flex; width: 639px; justify-content: flex-end; padding-right: 8px; }

/* Bookmarks bar */
.bookmarks { display: flex; align-items: center; gap: 22px; height: 41px; padding: 0 18px 6px 17px; }
.bookmark { display: flex; align-items: center; gap: 10px; white-space: nowrap; }
.bookmarks-more { margin-left: auto; margin-right: -10px; color: #b8bdc1; }
.bookmark-all { padding-left: 13px; border-left: 1px solid #51565a; }

/* Workspace */
.workspace { flex: 1; min-height: 0; display: flex; font-size: 15px; color: #e3e3e3; }
.device { flex: 1; min-width: 0; display: flex; flex-direction: column; }
.device-bar { display: flex; align-items: center; height: 37px; padding-left: 399px; border-bottom: 1px solid #5e5e5e; }
.pick { display: flex; align-items: center; }
.pick select { appearance: none; flex: 1; min-width: 0; }
.pick-arrow { width: 10px; height: 9px; margin-top: -4px; }
.pick-model { width: 180px; margin-right: 36px; }
.pick-zoom { width: 48px; margin: 0 16px 0 36px; }
.pick-throttle { width: 110px; }
.size { width: 42px; color: #a0a0a0; }
.times { width: 43px; padding-left: 18px; }
.rotate { margin-left: 34px; height: 24px; }
.device-more { margin: 0 26px 0 auto; height: 18px; }
.ruler { width: 100%; height: 27px; background: #28292d; border-bottom: 1px solid #5e5e5e; }
.stage { flex: 1; min-height: 0; display: flex; justify-content: center; padding: 28px 0; }
.phone {
  width: 427px;
  overflow: hidden;
  background: #0f172a;
  font-family: Lato, sans-serif;
  font-variant-ligatures: none;
}
.site { width: 242px; }
.site-top {
  display: flex;
  align-items: center;
  justify-content: flex-end;
  gap: 6px;
  height: 31px;
  padding-right: 20px;
  background: #9333ea;
  color: #fff;
  font-size: 10px;
  font-weight: 700;
}
.site-logo { display: block; width: 52px; height: 38px; margin: 38px 0 27px 40px; }
.site-nav {
  width: 120px;
  margin-left: 16px;
  display: flex;
  flex-direction: column;
  align-items: flex-end;
  justify-content: space-between;
  height: 75px;
  border-radius: 15px;
  background: #2a3042;
}
.site-links { display: flex; gap: 22px; width: 100%; padding: 6px; color: #a7abb3; font-size: 9px; }
.site-cta {
  width: 79px;
  height: 31px;
  border-radius: 15px;
  background: #9333ea;
  color: #fff;
  font-size: 9px;
  font-weight: 700;
}
.hero { width: 142px; margin: 59px 0 0 66px; text-align: center; }
.hero-title { margin: 0; color: #fff; font-size: 52px; line-height: 52px; font-weight: 700; }
.hero-text { margin: 20px 0 0; color: #a7abb3; font-size: 10px; line-height: 1.24; white-space: nowrap; }

/* Developer tools */
.devtools { width: 558px; display: flex; flex-direction: column; border-left: 1px solid #5e5e5e; background: #282828; }
.panel-bar, .subtabs { display: flex; align-items: center; height: 37px; background: #3c3c3c; border-bottom: 1px solid #5e5e5e; color: #c7c7c7; }
.panel-bar { padding: 0 6px 0 3px; }
.tool { width: 38px; height: 36px; display: flex; align-items: center; justify-content: center; color: #c7c7c7; }
.tool-last { width: 36px; }
.rule { width: 1px; height: 20px; margin: 0 8px 0 7px; background: #5e5e5e; }
.rule-end { margin: 0 7px 0 auto; }
.ptab { height: 37px; padding: 0 16px; border-bottom: 3px solid transparent; border-top: 3px solid transparent; }
.ptab-on { color: #a8c7fa; border-bottom-color: #7cacf8; }
.ptab-more { width: 26px; height: 14px; margin-left: 2px; }
.subtabs .ptab-more { margin-left: 0; }

.source { display: flex; height: 250px; overflow: hidden; }
.source-code {
  flex: 1;
  margin: 0 0 0 43px;
  padding-left: 26px;
  border-left: 1px solid #474747;
  white-space: nowrap;
  font: 15px/1.49 "Liberation Mono", monospace;
}
.line:first-child { margin-top: -7px; }
.line-in { padding-left: 17px; }
.k-sel { color: #7cacf8; }
.k-ps { color: #1b5fd6; }
.k-p { color: #fcd21e; }
.k-v { color: #c4eed0; }
.k-s { color: #fe8d59; }
.k-at { color: #bf67ff; }

.vbar { width: 21px; display: flex; flex-direction: column; align-items: center; justify-content: space-between; padding: 8px 0; background: #424242; }
.vbar-source { height: 250px; }
.vthumb { width: 17px; background: #6a6a6a; }
.vthumb-source { height: 21px; margin: 43px 0 auto; }
.vthumb-styles { height: 224px; margin: 7px 0 auto; }
.arrow { width: 10px; height: 6px; color: #fff; }
.arrow-up { transform: rotate(180deg); }
.arrow-left { transform: rotate(90deg); color: #8a8a8a; }
.arrow-right { transform: rotate(-90deg); }
.arrow-off { color: #8a8a8a; }
.hbar { display: flex; align-items: center; height: 21px; padding-left: 6px; background: #424242; }
.hthumb { width: 195px; height: 17px; margin: 0 auto 0 5px; background: #6a6a6a; }
.hbar-corner { width: 21px; height: 21px; margin-left: 6px; background: #111; }

.crumbs { display: flex; height: 34px; border: solid #5e5e5e; border-width: 1px 0; color: #7cacf8; line-height: 31px; }
.crumbs a { padding: 0 10px; }
.crumbs .crumb-on { background: #004a77; }

.stab { height: 37px; padding: 0 15px; border-bottom: 2px solid transparent; border-top: 2px solid transparent; }
.stab-on { padding: 0 13px; color: #a8c7fa; border-bottom-color: #7cacf8; }

.styles { flex: 1; min-height: 0; display: flex; font-family: "Liberation Mono", monospace; }
.styles-main { flex: 1; min-width: 0; overflow: hidden; }
.filter { display: flex; align-items: center; height: 37px; padding: 0 6px 0 7px; border-bottom: 1px solid #5e5e5e; color: #c7c7c7; }
.filter-input {
  flex: 1;
  min-width: 0;
  height: 26px;
  padding-left: 5px;
  margin-right: 5px;
  border: 1px solid #757575;
  border-radius: 4px;
  font-family: "Noto Sans", sans-serif;
}
.filter-input::placeholder { color: #8a8a8a; }
.filter-word { width: 50px; font-weight: 700; }
.filter-icon { width: 38px; height: 26px; display: flex; align-items: center; justify-content: center; }
.rule-block { padding: 4px 2px 2px 6px; border-bottom: 1px solid #5e5e5e; line-height: 20px; }
.rule-head { display: flex; justify-content: space-between; line-height: 22px; }
.rule-head a { text-decoration: underline; }
.rule-agent { font-style: italic; }
.decl { padding-left: 24px; }
.prop { color: #5cd5fb; }
.dim { color: #8f8f8f; }
.pseudo {
  margin: 0;
  padding-left: 7px;
  border-bottom: 1px solid #5e5e5e;
  background: #2b2c31;
  color: #8f8f8f;
  font: 15px/31px "Noto Sans", sans-serif;
}
.expand { width: 11px; height: 8px; margin-right: 6px; transform: rotate(-90deg); color: #c7c7c7; }
.swatch { display: inline-block; width: 15px; height: 15px; margin: 0 4px -2px 2px; border: 1px solid #6b6b6b; background: #9333ea; }

.drawer { display: flex; align-items: center; height: 37px; padding: 0 3px; background: #3c3c3c; border-top: 1px solid #5e5e5e; }
.dtab { height: 36px; padding: 0 12px; margin-right: 3px; color: #c7c7c7; border-bottom: 3px solid transparent; border-top: 3px solid transparent; }
.dtab-on { display: flex; align-items: center; gap: 10px; color: #a8c7fa; border-bottom-color: #7cacf8; }
.dtab-on svg { color: #c7c7c7; }
.drawer-close { margin-left: auto; }
.drawer-edge { height: 2px; background: repeating-linear-gradient(90deg, #9a9a9a 0 3px, #282828 3px 7px, #9a9a9a 7px 9px, #282828 9px 12px); }

/* Taskbar */
.taskbar {
  display: grid;
  grid-template-columns: 1fr auto 1fr;
  align-items: center;
  height: 60px;
  border-top: 1px solid #4a4438;
  background: linear-gradient(90deg, #202325, #2b2219 18%, #302315 40%, #2b2515 60%, #2b2316 78%, #22241e);
}
.weather { display: flex; align-items: center; gap: 9px; padding-left: 25px; text-align: left; }
.weather-text { display: flex; flex-direction: column; }
.weather-sub { color: #c9c7c4; }
.apps { display: flex; align-items: center; padding-left: 6px; }
.app { position: relative; width: 50px; height: 50px; margin-left: 5px; display: flex; align-items: center; justify-content: center; }
.app-start { width: 30px; }
.search {
  display: flex;
  align-items: center;
  gap: 12px;
  width: 274px;
  height: 40px;
  margin: 0 1px 0 16px;
  padding: 0 2px 0 13px;
  border: 1px solid #665e50;
  border-radius: 20px;
  background: #4b4335;
}
.search-input { flex: 1; min-width: 0; font-size: 16px; }
.search-input::placeholder { color: #d6d2cb; }
.app-on { border: 1px solid #443f35; border-radius: 5px; background: #3a3428; }
.app-on::after, .app-wa::after {
  content: "";
  position: absolute;
  bottom: 1px;
  width: 20px;
  height: 4px;
  border-radius: 2px;
  background: #d99be0;
}
.app-wa::after { width: 8px; background: #a09a8f; }
.wa-count {
  position: absolute;
  top: 3px;
  right: 2px;
  width: 23px;
  border-radius: 10px;
  background: #d99be0;
  color: #1c1c1c;
  font-size: 13px;
}
.tag-new { position: absolute; right: 9px; bottom: 9px; padding: 0 2px; border-radius: 2px; background: #22e0e0; color: #102a2a; font-size: 7px; line-height: 9px; }
.tray { display: flex; align-items: center; justify-content: flex-end; padding-right: 25px; }
.tray > svg { margin-right: 18px; }
.tray .bell { margin-right: 22px; }
.tray-up { margin-right: 22px; height: 9px; display: flex; }
.lang, .clock { display: flex; flex-direction: column; }
.lang { align-items: center; width: 38px; margin-right: 18px; }
.status { display: flex; align-items: center; gap: 10px; margin-right: 24px; }
.clock { align-items: flex-end; margin-right: 9px; }
.copilot { position: relative; display: flex; }
.tag-pre { position: absolute; right: 0; bottom: -1px; padding: 0 3px; border-radius: 2px; background: #fbbf00; color: #222; font-size: 8px; line-height: 9px; }
```
